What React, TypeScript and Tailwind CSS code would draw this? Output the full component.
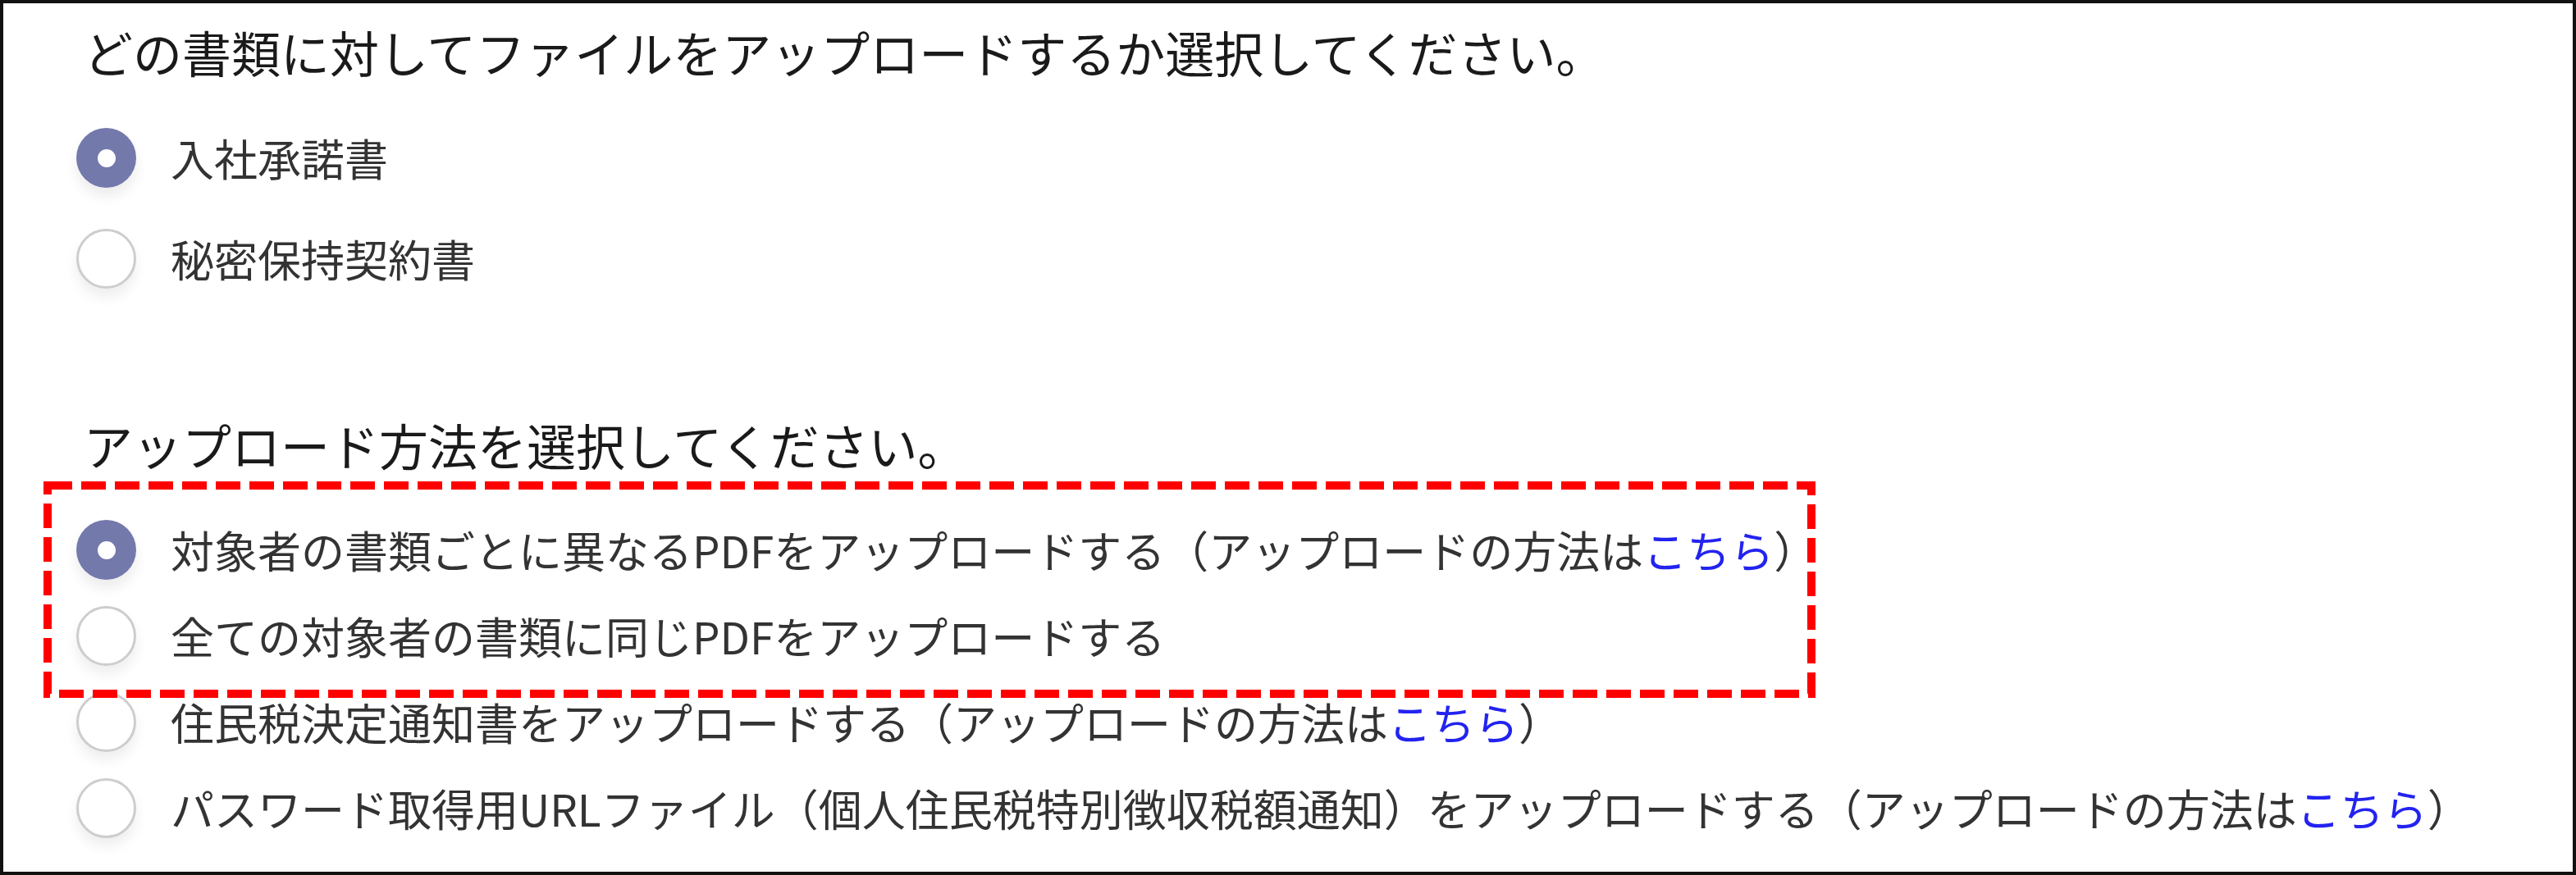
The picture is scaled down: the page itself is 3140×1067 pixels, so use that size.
import React from "react";

type RowProps = { checked?: boolean; children: React.ReactNode; h: string };

function Radio({ checked }: { checked?: boolean }) {
  if (checked) {
    return (
      <div className="w-[73px] h-[73px] shrink-0 rounded-full bg-[#7379ab] flex items-center justify-center shadow-[0_10px_16px_rgba(0,0,0,0.08)]">
        <div className="w-[22px] h-[22px] rounded-full bg-white" />
      </div>
    );
  }
  return (
    <div className="w-[73px] h-[73px] shrink-0 rounded-full bg-white border-[3px] border-[#cdcdcd] shadow-[0_10px_16px_rgba(0,0,0,0.07)]" />
  );
}

function Row({ checked, children, h }: RowProps) {
  return (
    <div className={`flex items-center gap-[42px] ${h}`}>
      <Radio checked={checked} />
      <div className="text-[53px] leading-none text-[#333333] whitespace-nowrap">{children}</div>
    </div>
  );
}

function Link() {
  return <span className="text-[#2323f0]">こちら</span>;
}

export default function App() {
  return (
    <div
      className="relative w-[3140px] h-[1067px] box-border border-[4px] border-[#111111] bg-white overflow-hidden"
      style={{ fontFamily: '"Noto Sans CJK JP", "Noto Sans", sans-serif' }}
    >
      <div className="flex flex-col pl-[89px] pt-[9px]">
        <div className="h-[100px] flex items-center pl-[9px] text-[60px] leading-none text-[#1a1a1a] whitespace-nowrap">
          どの書類に対してファイルをアップロードするか選択してください。
        </div>
        <div className="mt-[18px]">
          <Row checked h="h-[123px]">入社承諾書</Row>
          <Row h="h-[123px]">秘密保持契約書</Row>
        </div>
        <div className="mt-[115px] h-[100px] flex items-center pl-[9px] text-[60px] leading-none text-[#1a1a1a] whitespace-nowrap">
          アップロード方法を選択してください。
        </div>
        <div className="mt-[26px]">
          <Row checked h="h-[105px]">
            対象者の書類ごとに異なるPDFをアップロードする（アップロードの方法は<Link />）
          </Row>
          <Row h="h-[105px]">全ての対象者の書類に同じPDFをアップロードする</Row>
          <Row h="h-[105px]">
            住民税決定通知書をアップロードする（アップロードの方法は<Link />）
          </Row>
          <Row h="h-[105px]">
            パスワード取得用URLファイル（個人住民税特別徴収税額通知）をアップロードする（アップロードの方法は<Link />）
          </Row>
        </div>
      </div>
      <svg
        className="absolute left-[49px] top-[583px] pointer-events-none"
        width="2160"
        height="264"
        viewBox="0 0 2160 264"
      >
        <rect
          x="5"
          y="5"
          width="2150"
          height="254"
          fill="none"
          stroke="#ff0000"
          strokeWidth="10"
          strokeDasharray="30 11"
        />
      </svg>
    </div>
  );
}
